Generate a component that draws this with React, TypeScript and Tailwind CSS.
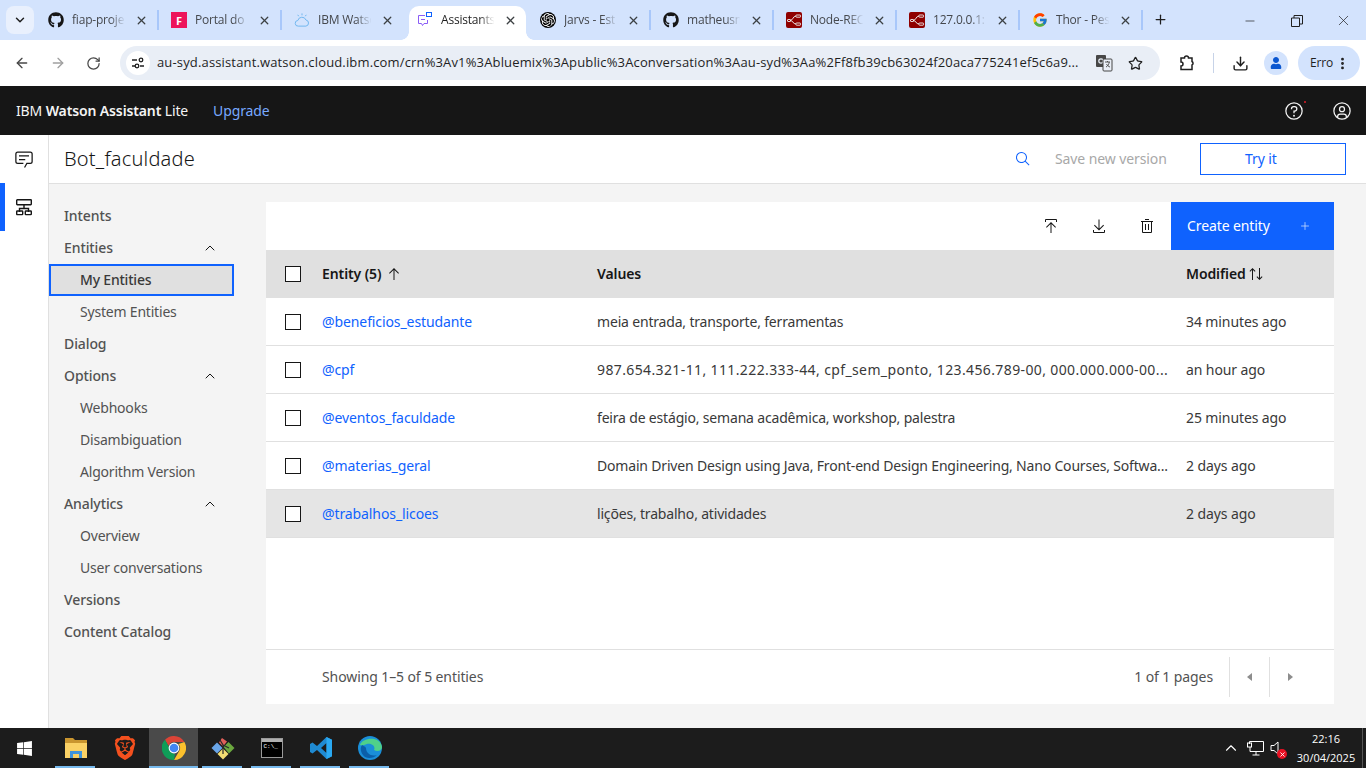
import type { ReactNode } from "react";
import { ChevronDown, ChevronUp, X, Plus, ArrowLeft, ArrowRight, RotateCw, Star, Download, MoreVertical, Minus } from "lucide-react";
import { FaGithub, FaWindows, FaUser } from "react-icons/fa";
import { FcGoogle } from "react-icons/fc";
import { SiOpenai, SiBrave } from "react-icons/si";

function Carbon({ size = 16, className = "", children }: { size?: number; className?: string; children: ReactNode }) {
  return (
    <svg width={size} height={size} viewBox="0 0 32 32" fill="currentColor" className={className}>
      {children}
    </svg>
  );
}

function NodeRed() {
  return (
    <svg width="16" height="16" viewBox="0 0 16 16">
      <rect width="16" height="16" rx="2" fill="#8f0000" />
      <path d="M4 8.500c3 0 3-4.500 6-4.500M4 8.500c3 0 3 3.500 6 3.500" fill="none" stroke="#eee" strokeWidth="1" />
      <rect x="10" y="3" width="4.500" height="2.200" rx=".5" fill="none" stroke="#eee" strokeWidth=".9" />
      <rect x="10" y="11" width="4.500" height="2.200" rx=".5" fill="none" stroke="#eee" strokeWidth=".9" />
      <rect x="1.500" y="7.500" width="3" height="2" rx=".5" fill="none" stroke="#eee" strokeWidth=".9" />
    </svg>
  );
}

function Chrome({ size = 24 }: { size?: number }) {
  return (
    <svg width={size} height={size} viewBox="0 0 24 24">
      <path d="M12 0a12 12 0 0 1 10.400 6H12a6 6 0 0 0-5.600 3.800L3 3.800A12 12 0 0 1 12 0z" fill="#db4437" />
      <path d="M22.400 6A12 12 0 0 1 12 24l5.200-9A6 6 0 0 0 16.500 8z" fill="#fbc02d" />
      <path d="M12 24A12 12 0 0 1 3 3.800L7 11a6 6 0 0 0 6 6.900z" fill="#0f9d58" />
      <circle cx="12" cy="12" r="5.400" fill="#fff" />
      <circle cx="12" cy="12" r="4.300" fill="#4285f4" />
    </svg>
  );
}

const tabs: { title: string; icon: ReactNode; active?: boolean; noSep?: boolean }[] = [
  { title: "fiap-proje", icon: <FaGithub size={16} className="text-[#161616]" /> },
  {
    title: "Portal do",
    icon: (
      <div className="flex h-4 w-4 items-center justify-center bg-[#ed145b] text-[11px] font-bold leading-none text-white">F</div>
    ),
  },
  {
    title: "IBM Watso",
    noSep: true,
    icon: (
      <svg width="17" height="16" viewBox="0 0 17 16" fill="none" stroke="#6cb4ee" strokeWidth="1">
        <path d="M4.500 14.500a3 3 0 0 1-.4-6 4.500 4.500 0 0 1 8.600-.5 3.300 3.300 0 0 1 0 6.500z" />
        <path d="M8.500 1v2M4 2.500l1 1.500M13 2.500l-1 1.500" />
      </svg>
    ),
  },
  {
    title: "Assistants",
    active: true,
    noSep: true,
    icon: (
      <svg width="16" height="16" viewBox="0 0 16 16" fill="none" strokeWidth="1">
        <path d="M8 3.500H1.500v8h3l1 2 1.500-2h3.500V8" stroke="#8a5cf6" />
        <path d="M4 7.500h4" stroke="#8a5cf6" />
        <rect x="9.500" y=".5" width="5" height="4" stroke="#0f62fe" />
      </svg>
    ),
  },
  { title: "Jarvs - Est", icon: <SiOpenai size={16} className="rounded-full bg-black p-px text-white" /> },
  { title: "matheusm", icon: <FaGithub size={16} className="text-[#161616]" /> },
  { title: "Node-REC", icon: <NodeRed /> },
  { title: "127.0.0.1:1", icon: <NodeRed /> },
  { title: "Thor - Pes", icon: <FcGoogle size={16} /> },
];

const navItems = [
  { label: "Intents" },
  { label: "Entities", open: true },
  { label: "My Entities", sub: true, selected: true },
  { label: "System Entities", sub: true },
  { label: "Dialog" },
  { label: "Options", open: true },
  { label: "Webhooks", sub: true },
  { label: "Disambiguation", sub: true },
  { label: "Algorithm Version", sub: true },
  { label: "Analytics", open: true },
  { label: "Overview", sub: true },
  { label: "User conversations", sub: true },
  { label: "Versions" },
  { label: "Content Catalog" },
];

const entities = [
  { name: "@beneficios_estudante", values: "meia entrada, transporte, ferramentas", modified: "34 minutes ago" },
  { name: "@cpf", values: "987.654.321-11, 111.222.333-44, cpf_sem_ponto, 123.456.789-00, 000.000.000-00...", modified: "an hour ago", digits: true },
  { name: "@eventos_faculdade", values: "feira de estágio, semana acadêmica, workshop, palestra", modified: "25 minutes ago" },
  { name: "@materias_geral", values: "Domain Driven Design using Java, Front-end Design Engineering, Nano Courses, Softwa...", modified: "2 days ago" },
  { name: "@trabalhos_licoes", values: "lições, trabalho, atividades", modified: "2 days ago", hover: true },
];

function BrowserChrome() {
  return (
    <div className="font-['Open_Sans',sans-serif]">
      {/* Tab strip */}
      <div className="flex h-10 items-start bg-[#d3e3fd] pl-[6px]">
        <div className="mt-[6px] mr-[2px] flex h-7 w-7 items-center justify-center rounded-lg bg-[#e9f0fd]">
          <ChevronDown size={14} strokeWidth={2.5} className="text-[#1f1f1f]" />
        </div>
        {tabs.map((tab) => (
          <div
            key={tab.title}
            className={`relative mt-[6px] flex h-[34px] shrink-0 items-center pb-[6px] ${
              tab.active ? "ml-[4px] mr-[2px] w-[117px] rounded-t-[10px] bg-white pl-[8px]" : "w-[123px] pl-[12px]"
            }`}
          >
            <div className="flex w-4 shrink-0 justify-center">{tab.icon}</div>
            <span
              className={`ml-2 w-[58px] overflow-hidden whitespace-nowrap text-[12px] tracking-[-0.2px] [mask-image:linear-gradient(to_right,black_66%,transparent_92%)] ${
                tab.active ? "text-[#1f1f1f]" : "text-[#45484d]"
              }`}
            >
              {tab.title}
            </span>
            <X size={13} strokeWidth={2.4} className="ml-[5px] shrink-0 text-[#3c4043]" />
            {!tab.noSep && <div className="ml-[9px] h-5 w-[2px] shrink-0 bg-[#a8c7fa]" />}
            {tab.active && (
              <>
                <div className="absolute bottom-0 left-[-8px] h-2 w-2 bg-[radial-gradient(circle_at_0_0,transparent_7.5px,white_8px)]" />
                <div className="absolute bottom-0 right-[-8px] h-2 w-2 bg-[radial-gradient(circle_at_100%_0,transparent_7.5px,white_8px)]" />
              </>
            )}
          </div>
        ))}
        <Plus size={15} strokeWidth={2} className="mt-[12px] ml-[10px] text-[#1f1f1f]" />
        <div className="ml-auto mt-[12px] flex items-center">
          <Minus size={14} strokeWidth={1.2} className="mr-[34px] text-[#1f1f1f]" />
          <svg width="12" height="12" viewBox="0 0 12 12" fill="none" stroke="#1f1f1f" className="mr-[32px]">
            <path d="M.5 3h8v8.500h-8zM3 3V.5h8.500V9H9" />
          </svg>
          <X size={17} strokeWidth={1} className="mr-[14px] text-[#1f1f1f]" />
        </div>
      </div>
      {/* Toolbar */}
      <div className="flex h-[46px] items-start bg-white pt-[6px] text-[#474747]">
        <div className="flex h-[34px] w-[120px] items-center gap-5 pl-[14px]">
          <ArrowLeft size={16} strokeWidth={2} />
          <ArrowRight size={16} strokeWidth={2} className="text-[#a0a0a0]" />
          <RotateCw size={15} strokeWidth={2} />
        </div>
        <div className="flex h-[34px] w-[1040px] items-center rounded-full bg-[#e9eef6] pl-[6px]">
          <div className="flex h-6 w-6 items-center justify-center rounded-full bg-white">
            <svg width="14" height="14" viewBox="0 0 14 14" fill="none" stroke="#1f1f1f" strokeWidth="1.3">
              <path d="M1 4h5M9 10h4M1 10h3" />
              <circle cx="10" cy="4" r="1.800" />
              <circle cx="6" cy="10" r="1.800" />
            </svg>
          </div>
          <span className="ml-[7px] w-[922px] whitespace-nowrap text-[13px] tracking-[0.15px] text-[#1f1f1f]">
            au-syd.assistant.watson.cloud.ibm.com/crn%3Av1%3Abluemix%3Apublic%3Aconversation%3Aau-syd%3Aa%2Ff8fb39cb63024f20aca775241ef5c6a9...
          </span>
          <svg width="18" height="18" viewBox="0 0 18 18" className="ml-[16px]">
            <rect x="1" y="1" width="10" height="12" rx="1" fill="#474747" />
            <circle cx="6" cy="7" r="2.200" fill="none" stroke="#e9eef6" strokeWidth="1.200" />
            <rect x="8" y="5" width="9" height="12" rx="1" fill="#e9eef6" stroke="#474747" />
            <path d="M10 8h5M12.500 7v1M11 13c2-1 3-3 3.200-5M11.500 10c.7 1.300 2 2.600 3.500 3" fill="none" stroke="#474747" strokeWidth=".9" />
          </svg>
          <Star size={15} strokeWidth={2} className="ml-[15px] text-[#1f1f1f]" />
        </div>
        <div className="flex h-[34px] flex-1 items-center">
          <svg width="18" height="18" viewBox="0 0 18 18" fill="none" stroke="#1f1f1f" strokeWidth="1.5" className="ml-[18px]">
            <path d="M3 4h3.500a2 2 0 0 1 4 0H14v3.500a2 2 0 0 1 0 3.500v4.500H3v-3.500a2 2 0 0 0 0-4z" />
          </svg>
          <div className="ml-[17px] h-5 w-px bg-[#c7d3e8]" />
          <Download size={17} strokeWidth={2} className="ml-[18px] text-[#1f1f1f]" />
          <div className="ml-[15px] flex h-6 w-6 items-center justify-center rounded-full bg-[#d3e3fd]">
            <FaUser size={12} className="text-[#0b57d0]" />
          </div>
          <div className="ml-[10px] flex h-[34px] w-[62px] items-center rounded-full bg-[#d3e3fd] pl-3 text-[12px] tracking-[-0.2px] text-[#1f1f1f]">
            Erro
            <MoreVertical size={15} strokeWidth={2.5} className="ml-[2px]" />
          </div>
        </div>
      </div>
    </div>
  );
}

function AppHeader() {
  return (
    <header className="flex h-[49px] items-center justify-between bg-[#161616] pl-4 pr-[14px] font-['Noto_Sans',sans-serif] tracking-[-0.13px]">
      <div className="flex items-center text-[14px] text-[#f4f4f4]">
        <span>
          IBM <span className="font-semibold">Watson Assistant</span> Lite
        </span>
        <span className="ml-[25px] text-[#78a9ff]">Upgrade</span>
      </div>
      <div className="flex items-center gap-[28px] text-[#f4f4f4]">
        <div className="relative">
          <Carbon size={20}>
            <path d="M16 2a14 14 0 1 0 14 14A14 14 0 0 0 16 2zm0 26a12 12 0 1 1 12-12 12 12 0 0 1-12 12z" />
            <circle cx="16" cy="23.5" r="1.5" />
            <path d="M17 8H15.500A4.490 4.490 0 0 0 11 12.500V13h2v-.5A2.500 2.500 0 0 1 15.500 10H17a2.500 2.500 0 0 1 0 5H15v4.500h2V17a4.500 4.500 0 0 0 0-9z" />
          </Carbon>
          <div className="absolute right-[-2px] top-0 h-[2px] w-[2px] rounded-full bg-[#da1e28]" />
        </div>
        <Carbon size={20}>
          <path d="M16 8a5 5 0 1 0 5 5A5 5 0 0 0 16 8zm0 8a3 3 0 1 1 3-3A3.0034 3.0034 0 0 1 16 16z" />
          <path d="M16 2a14 14 0 1 0 14 14A14.0158 14.0158 0 0 0 16 2zM10 26.3765V25a3.0033 3.0033 0 0 1 3-3h6a3.0033 3.0033 0 0 1 3 3v1.3765a11.8989 11.8989 0 0 1-12 0zm13.9925-1.4507A5.0016 5.0016 0 0 0 19 20H13a5.0016 5.0016 0 0 0-4.9925 4.9258 12 12 0 1 1 15.985 0z" />
        </Carbon>
      </div>
    </header>
  );
}

function Checkbox() {
  return <div className="h-4 w-4 border border-[#161616] bg-white" />;
}

function EntityTable() {
  return (
    <div className="flex h-[502px] flex-1 flex-col bg-white">
      <div className="flex h-12 shrink-0 items-center justify-end text-[#161616]">
        <div className="flex h-12 w-12 items-center justify-center">
          <Carbon size={16}>
            <path d="M6 18L7.410 19.410 15 11.830 15 30 17 30 17 11.830 24.590 19.410 26 18 16 8 6 18z" />
            <path d="M6 8V4H26V8h2V4a2 2 0 0 0-2-2H6A2 2 0 0 0 4 4V8z" />
          </Carbon>
        </div>
        <div className="flex h-12 w-12 items-center justify-center">
          <Carbon size={16}>
            <path d="M26 15L24.590 13.590 17 21.170 17 3 15 3 15 21.170 7.410 13.590 6 15 16 25 26 15z" />
            <path d="M26 24v4H6V24H4v4a2 2 0 0 0 2 2H26a2 2 0 0 0 2-2V24z" />
          </Carbon>
        </div>
        <div className="flex h-12 w-12 items-center justify-center">
          <Carbon size={16}>
            <path d="M12 12H14V24H12zM18 12h2V24H18z" />
            <path d="M4 6V8H6V28a2 2 0 0 0 2 2H24a2 2 0 0 0 2-2V8h2V6zM8 28V8H24V28z" />
            <path d="M12 2H20V4H12z" />
          </Carbon>
        </div>
        <div className="flex h-12 w-[163px] items-center justify-between bg-[#0f62fe] pb-px pl-4 pr-[23px] text-[14px] text-white">
          Create entity
          <Plus size={12} strokeWidth={1.5} className="text-[#d0e2ff]" />
        </div>
      </div>

      <div className="grid h-12 shrink-0 grid-cols-[56px_275px_589px_1fr] items-center bg-[#e0e0e0] text-[14px] font-semibold text-[#161616]">
        <div className="pl-[19px]"><Checkbox /></div>
        <div className="flex items-center gap-[5px] pb-px">
          Entity (5)
          <Carbon size={16}>
            <path d="M16 4L6 14l1.410 1.410L15 7.830V28h2V7.830l7.590 7.580L26 14 16 4z" />
          </Carbon>
        </div>
        <div className="pb-px">Values</div>
        <div className="flex items-center gap-[2px] pb-px">
          Modified
          <Carbon size={16}>
            <path d="M27.600 20.600L24 24.200V4h-2v20.200l-3.600-3.600L17 22l6 6 6-6zM9 4L3 10l1.400 1.400L8 7.800V28h2V7.800l3.600 3.600L15 10z" />
          </Carbon>
        </div>
      </div>

      {entities.map((row) => (
        <div
          key={row.name}
          className={`grid h-12 shrink-0 grid-cols-[56px_275px_589px_1fr] items-center border-b border-[#e0e0e0] text-[14px] text-[#393939] ${
            row.hover ? "bg-[#e5e5e5]" : ""
          }`}
        >
          <div className="pl-[19px]"><Checkbox /></div>
          <div className="text-[#0f62fe]">{row.name}</div>
          <div className={`whitespace-nowrap ${row.digits ? "tracking-[0.38px]" : "tracking-[-0.18px]"}`}>{row.values}</div>
          <div>{row.modified}</div>
        </div>
      ))}

      <div className="mt-auto flex h-[55px] shrink-0 items-center border-t border-[#e0e0e0] pl-14 text-[14px] text-[#525252]">
        <span className="pb-px">Showing 1–5 of 5 entities</span>
        <span className="ml-auto mr-4 pb-px">1 of 1 pages</span>
        <div className="flex h-10 w-10 items-center justify-center border-l border-[#e0e0e0]">
          <div className="h-0 w-0 border-y-[4px] border-r-[5px] border-y-transparent border-r-[#8d8d8d]" />
        </div>
        <div className="flex h-10 w-10 items-center justify-center border-l border-[#e0e0e0] pl-px">
          <div className="h-0 w-0 border-y-[4px] border-l-[5px] border-y-transparent border-l-[#8d8d8d]" />
        </div>
        <div className="w-[25px]" />
      </div>
    </div>
  );
}

function Workspace() {
  return (
    <div className="flex flex-1 font-['Noto_Sans',sans-serif] tracking-[-0.1px]">
      {/* Icon rail */}
      <div className="flex w-[49px] shrink-0 flex-col border-r border-[#e0e0e0] bg-white">
        <div className="flex h-12 items-center justify-center text-[#161616]">
          <Carbon size={20}>
            <path d="M17.740 30L16 29l4-7h6a2 2 0 0 0 2-2V8a2 2 0 0 0-2-2H6a2 2 0 0 0-2 2v12a2 2 0 0 0 2 2h9v2H6a4 4 0 0 1-4-4V8a4 4 0 0 1 4-4h20a4 4 0 0 1 4 4v12a4 4 0 0 1-4 4h-4.840z" />
            <path d="M8 10h16v2H8zM8 16h10v2H8z" />
          </Carbon>
        </div>
        <div className="flex h-12 items-center justify-center border-l-[5px] border-[#0f62fe] pr-[5px] text-[#161616]">
          <svg width="20" height="20" viewBox="0 0 20 20" fill="none" stroke="currentColor" strokeWidth="1.400">
            <rect x="2.700" y="2.700" width="14.600" height="5" rx=".6" />
            <path d="M10 7.700v3.800M5.500 15v-3.500h9V15" />
            <rect x="2.700" y="14" width="6" height="3.600" rx=".6" />
            <rect x="11.300" y="14" width="6" height="3.600" rx=".6" />
          </svg>
        </div>
      </div>

      <div className="flex flex-1 flex-col">
        {/* Title bar */}
        <div className="flex h-[49px] shrink-0 items-center border-b border-[#e0e0e0] bg-white pb-px pl-[15px] pr-5">
          <span className="text-[20px] font-light tracking-[0.2px] text-[#161616]">Bot_faculdade</span>
          <Carbon size={16} className="ml-auto text-[#0f62fe]">
            <path d="M29 27.586l-7.552-7.552a11.018 11.018 0 1 0-1.414 1.414L27.586 29zM4 13a9 9 0 1 1 9 9 9.010 9.010 0 0 1-9-9z" />
          </Carbon>
          <span className="ml-[24px] w-[145px] text-[14px] text-[#a8a8a8]">Save new version</span>
          <div className="flex h-8 w-[146px] items-center border border-[#0f62fe] pl-[44px] text-[14px] text-[#0f62fe]">
            Try it
          </div>
        </div>

        <div className="flex flex-1 bg-[#f4f4f4] pr-8">
          {/* Section nav */}
          <nav className="w-[217px] shrink-0 pt-4">
            {navItems.map((item) => (
              <div
                key={item.label}
                className={`flex h-8 w-[185px] items-center justify-between pb-px pr-4 text-[14px] ${
                  item.sub ? "pl-[31px] tracking-[-0.2px]" : "pl-[15px] font-medium"
                } ${item.selected ? "border-2 border-[#0f62fe] bg-[#e0e0e0] !pl-[29px] font-medium text-[#393939]" : "text-[#525252]"}`}
              >
                {item.label}
                {item.open && <ChevronUp size={16} strokeWidth={1.5} className="text-[#161616]" />}
              </div>
            ))}
          </nav>
          <div className="flex flex-1 pt-[18px]">
            <EntityTable />
          </div>
        </div>
      </div>
    </div>
  );
}

function Taskbar() {
  const apps: { key: string; icon: ReactNode; running?: boolean; active?: boolean }[] = [
    {
      key: "explorer",
      running: true,
      icon: (
        <svg width="24" height="22" viewBox="0 0 24 22">
          <path d="M1 1h8l2 2h12v5H1z" fill="#c9952f" />
          <path d="M1 6h22v15H1z" fill="#fad165" />
          <path d="M6 21v-7h12v7h-3v-4H9v4z" fill="#3f94dd" />
        </svg>
      ),
    },
    { key: "brave", icon: <SiBrave size={24} className="text-[#f4501e]" /> },
    { key: "chrome", running: true, active: true, icon: <Chrome /> },
    {
      key: "git",
      running: true,
      icon: (
        <svg width="24" height="24" viewBox="0 0 24 24">
          <path d="M8 6.500l3-4.500 5 3.500-4 5z" fill="#e0605a" />
          <path d="M.5 12l5.500-5.500 5.500 5.500-5.500 5.500z" fill="#6aa5e8" />
          <path d="M12.500 11l5-5 6 6-5.500 5.500z" fill="#6ba83f" />
          <path d="M6.500 18l5.500-5.500 5.500 5.500-5.500 5.500z" fill="#f3dd74" />
          <path d="M9 4l3 5v9M12 9l6 3M12 15.500h.1" stroke="#2a2a2a" strokeWidth="1.200" fill="none" />
        </svg>
      ),
    },
    {
      key: "cmd",
      running: true,
      icon: (
        <div className="h-[20px] w-[22px] border border-[#9a9a9a] bg-black">
          <div className="h-[3px] bg-[#b0b0b0]" />
          <div className="pl-[2px] font-['Liberation_Mono',monospace] text-[6px] leading-[9px] text-white">C:\_</div>
        </div>
      ),
    },
    {
      key: "vscode",
      running: true,
      icon: (
        <svg width="24" height="24" viewBox="0 0 24 24">
          <path
            fillRule="evenodd"
            d="M17.500 1L23 3.700v16.600L17.500 23 8 14l-4.500 3.500L1 16V8l2.500-1.500L8 10zM17.500 7L12 12l5.500 5z"
            fill="#1f8ad2"
          />
          <path d="M17.500 1L23 3.700v16.600L17.500 23z" fill="#2aa9f2" />
        </svg>
      ),
    },
    {
      key: "edge",
      running: true,
      icon: (
        <svg width="24" height="24" viewBox="0 0 24 24">
          <circle cx="12" cy="12" r="12" fill="#1a8ed8" />
          <path d="M2 9C4 2 22-1 24 11c0 4-5 5-8 3 2-4-3-7-7-6-3 1-5 2-7 1z" fill="#4fd08a" />
          <path d="M8 12c0 5 5 9 11 7-3 3-8 4-12 2-3-2-6-8-3-12 1 1 3 1 4 3z" fill="#0b5ea8" />
        </svg>
      ),
    },
  ];

  return (
    <div className="flex h-10 shrink-0 items-center bg-[#1c1c1c] font-['Open_Sans',sans-serif] text-white">
      <div className="flex h-10 w-[51px] items-center justify-center pr-[3px]">
        <FaWindows size={17} />
      </div>
      {apps.map((app) => (
        <div
          key={app.key}
          className={`relative flex h-10 w-[49px] items-center justify-center ${app.active ? "bg-[#4a4a4a]" : ""}`}
        >
          {app.icon}
          {app.running && (
            <div
              className={`absolute bottom-0 h-[2px] bg-[#76b9ed] ${app.active ? "left-0 w-full" : "left-[4px] w-10"}`}
            />
          )}
        </div>
      ))}
      <div className="ml-auto flex items-center">
        <ChevronUp size={18} strokeWidth={1.5} />
        <svg width="17" height="15" viewBox="0 0 17 15" fill="none" stroke="white" className="ml-[7px]">
          <path d="M2.500 3V.5h14v10H3V6M9 10.500V14M5.500 14h7" />
          <rect x=".5" y="2" width="4" height="4" />
        </svg>
        <div className="relative ml-[6px]">
          <svg width="16" height="16" viewBox="0 0 16 16" fill="none" stroke="white">
            <path d="M1 5.500h3L8 2v12l-4-3.500H1z" />
          </svg>
          <div className="absolute bottom-[-3px] right-[-1px] flex h-[10px] w-[10px] items-center justify-center rounded-full bg-[#e81123]">
            <X size={7} strokeWidth={3} />
          </div>
        </div>
        <div className="ml-[6px] w-[68px] text-center text-[11px] leading-[19px]">
          <div>22:16</div>
          <div>30/04/2025</div>
        </div>
        <div className="ml-[2px] mr-[3px] h-10 w-px bg-[#555]" />
      </div>
    </div>
  );
}

export default function App() {
  return (
    <div className="flex h-[768px] w-[1366px] flex-col overflow-hidden bg-white">
      <BrowserChrome />
      <AppHeader />
      <Workspace />
      <Taskbar />
    </div>
  );
}
